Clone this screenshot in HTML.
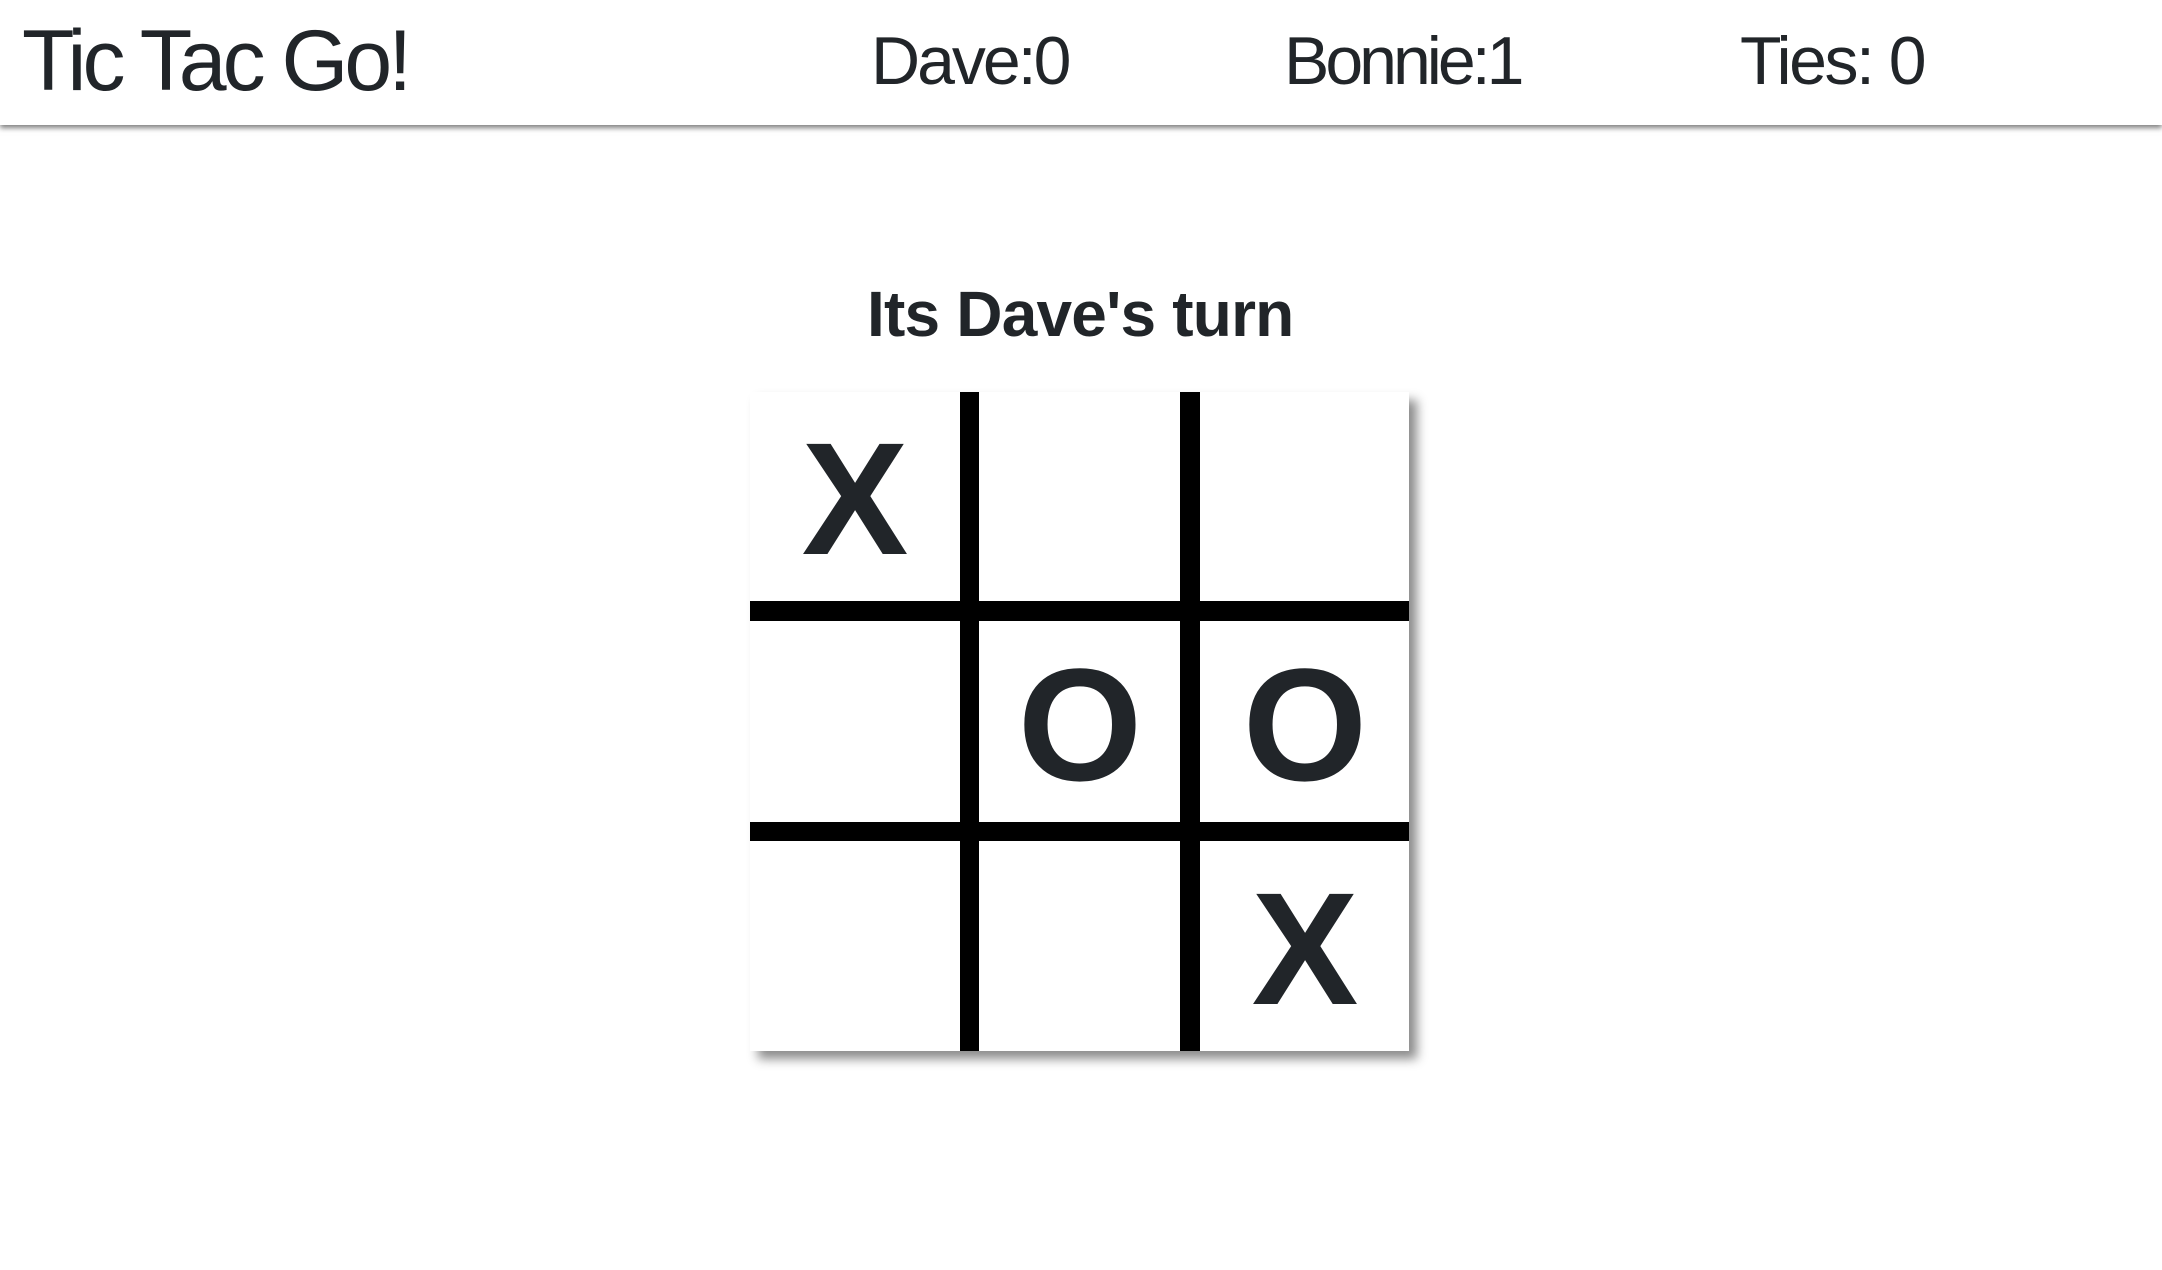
<!DOCTYPE html>
<html><head><meta charset="utf-8"><style>
html,body{margin:0;padding:0;background:#fff;width:2162px;height:1270px;overflow:hidden;font-family:"Liberation Sans",sans-serif;color:#212529}
.hdr{position:absolute;left:0;top:0;width:2162px;height:125px;background:#fff;box-shadow:0 3px 5px rgba(0,0,0,.5)}
.t{position:absolute;white-space:nowrap;line-height:1}
.board{position:absolute;left:750px;top:392px;width:659px;height:659px;background:#fff;box-shadow:8px 8px 10px rgba(0,0,0,.45)}
.v,.h{position:absolute;background:#000}
.m{position:absolute;font-weight:bold;font-size:160px;line-height:1;transform:translate(-50%,-50%);color:#212529}
</style></head><body>
<div class="hdr">
<div class="t" style="left:22px;top:18px;font-size:86px;letter-spacing:-4px">Tic Tac Go!</div>
<div class="t" style="left:871px;top:27px;font-size:68px;letter-spacing:-3px">Dave:0</div>
<div class="t" style="left:1284px;top:27px;font-size:68px;letter-spacing:-4px">Bonnie:1</div>
<div class="t" style="left:1740px;top:27px;font-size:68px;letter-spacing:-2.5px">Ties: 0</div>
</div>
<div class="t" style="left:867px;top:282px;font-size:64px;font-weight:bold;letter-spacing:-0.8px">Its Dave's turn</div>
<div class="board">
<div class="v" style="left:210px;top:0;width:19px;height:659px"></div>
<div class="v" style="left:430px;top:0;width:20px;height:659px"></div>
<div class="h" style="left:0;top:209px;width:659px;height:20px"></div>
<div class="h" style="left:0;top:430px;width:659px;height:19px"></div>
<div class="m" style="left:105px;top:107px">X</div>
<div class="m" style="left:330px;top:333px">O</div>
<div class="m" style="left:555px;top:333px">O</div>
<div class="m" style="left:555px;top:557px">X</div>
</div>
</body></html>
